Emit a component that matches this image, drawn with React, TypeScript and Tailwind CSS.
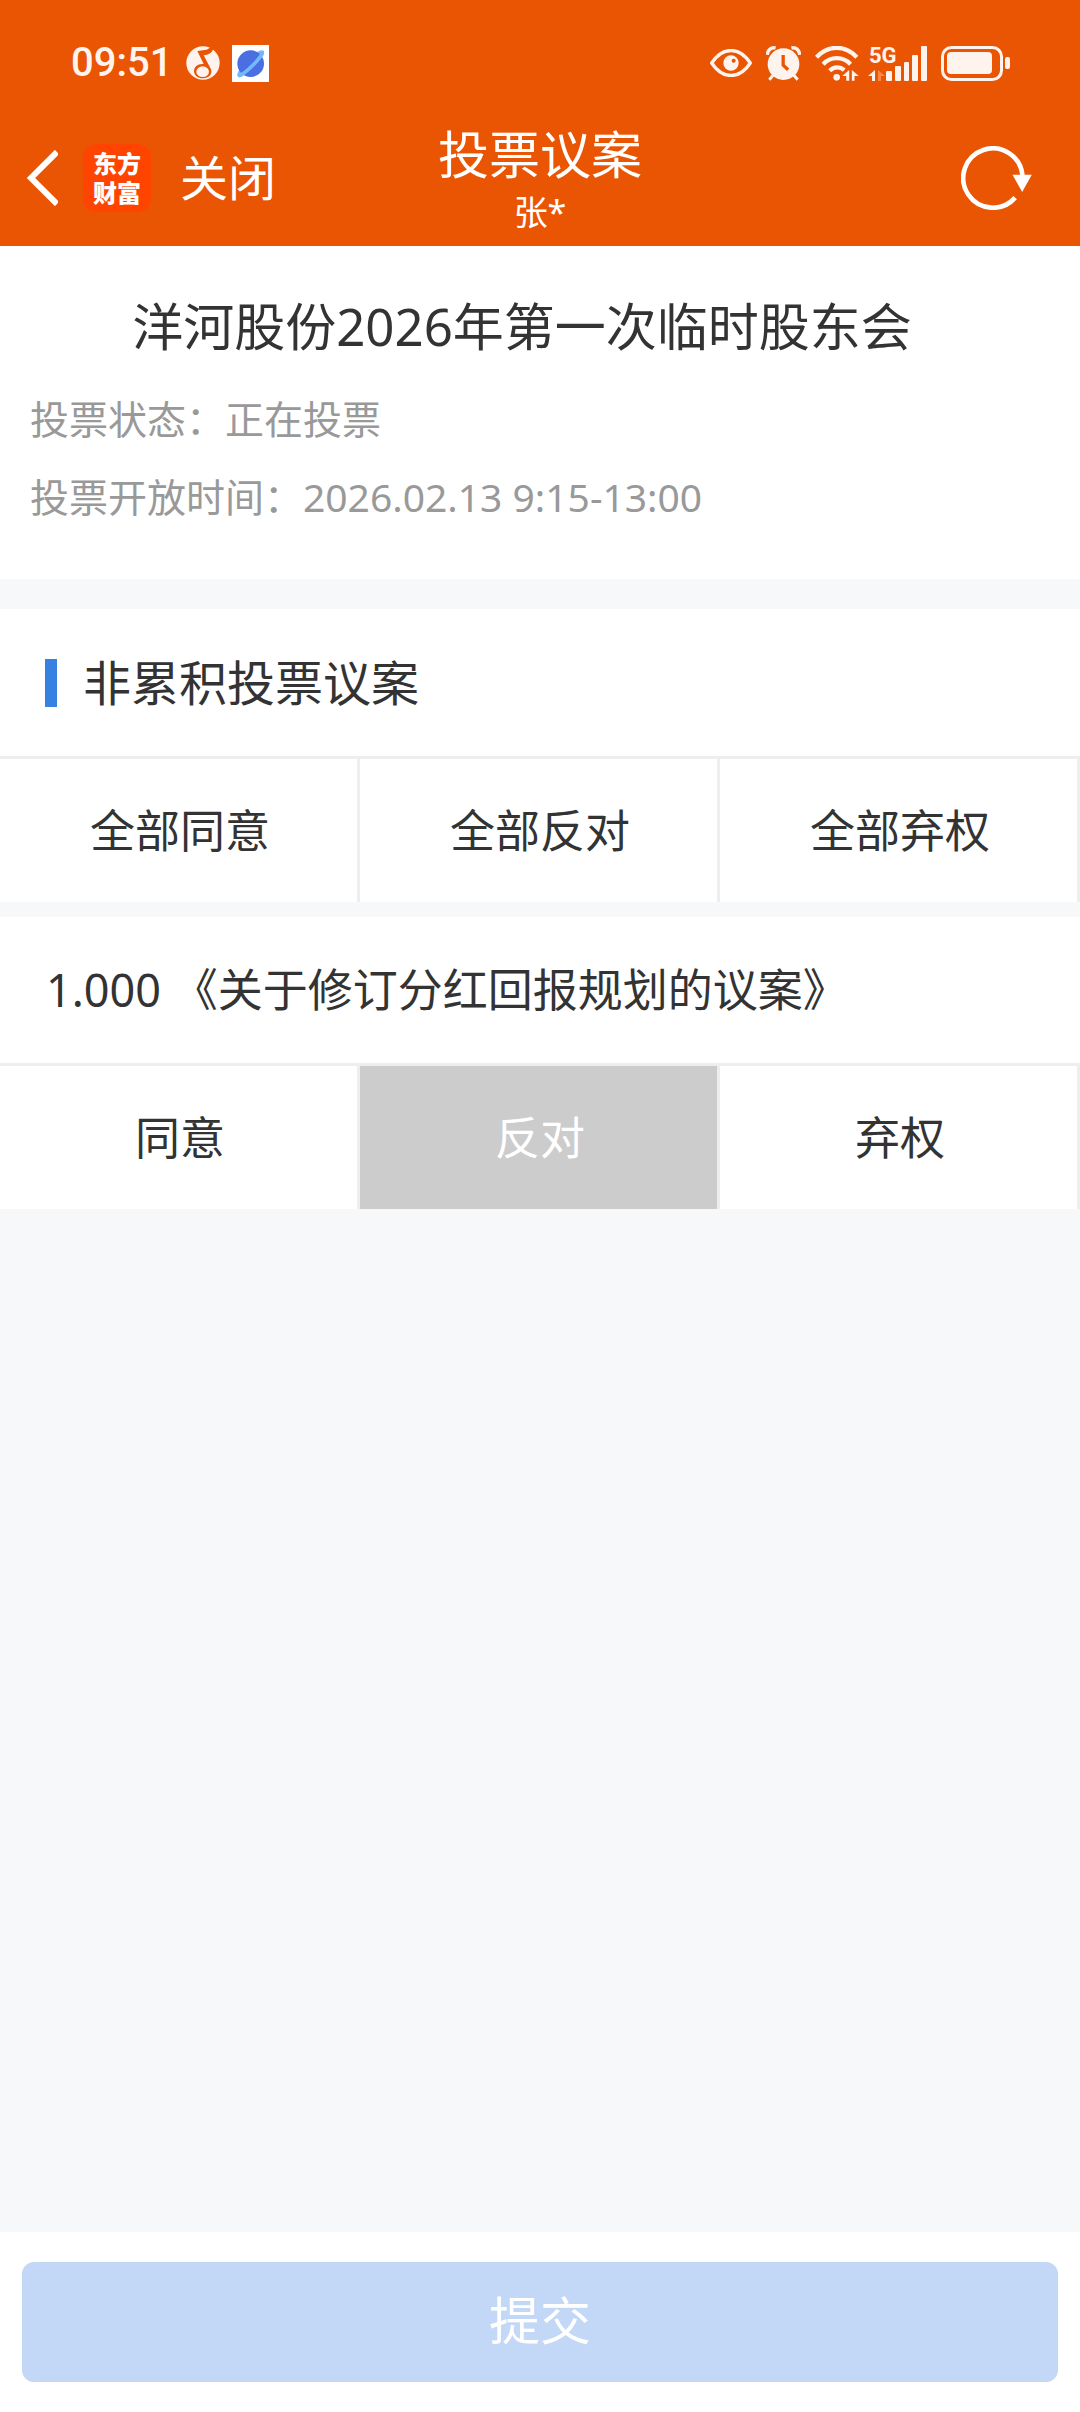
import { useState } from 'react'
import { clsx } from 'clsx'

const bulkActions = [
  { value: 'agree', label: '全部同意' },
  { value: 'against', label: '全部反对' },
  { value: 'abstain', label: '全部弃权' },
]

const voteOptions = [
  { value: 'agree', label: '同意' },
  { value: 'against', label: '反对' },
  { value: 'abstain', label: '弃权' },
]

const proposals = [{ id: '1.000', title: '《关于修订分红回报规划的议案》' }]

function MusicIcon() {
  return (
    <svg viewBox="0 0 102 102" className="h-[34px] w-[34px]" aria-hidden="true">
      <circle cx="51" cy="51" r="50" fill="#fff3ee" />
      <path d="M34 15 62 11 80 0 83 5C80 18 70 26 53 28L75 70C80 86 68 97 51 97 34 97 24 87 24 75 24 62 36 52 53 54Z" fill="#ea5504" />
      <ellipse cx="50" cy="77" rx="19" ry="16" fill="#fff3ee" />
    </svg>
  )
}

function PlanetIcon() {
  return (
    <svg viewBox="0 0 111 111" className="h-[37px] w-[37px]" aria-hidden="true">
      <rect width="111" height="111" fill="#fff" />
      <g transform="translate(56 56) rotate(-45)" fill="none" stroke="#73b8fa" strokeWidth="11">
        <ellipse rx="49" ry="8" />
        <circle r="40" fill="#4a6fe3" stroke="none" />
        <path d="M-49 0A49 8 0 0 0 49 0" />
      </g>
    </svg>
  )
}

function EyeIcon() {
  return (
    <svg viewBox="0 0 126 84" className="h-7 w-[42px]" aria-hidden="true">
      <path d="M5 42C38-8 88-8 121 42 88 92 38 92 5 42Z" fill="none" stroke="#fff3ee" strokeWidth="10" strokeLinejoin="round" />
      <circle cx="63" cy="42" r="23" fill="#fff3ee" />
      <circle cx="71" cy="35" r="6" fill="#ea5504" />
    </svg>
  )
}

function AlarmIcon() {
  return (
    <svg viewBox="0 0 106 106" className="h-[35px] w-[35px]" aria-hidden="true">
      <circle cx="53" cy="55" r="48" fill="#fff3ee" />
      <path d="M4 27C5 11 16 3 29 6M102 27C101 11 90 3 77 6" stroke="#fff3ee" strokeWidth="10" fill="none" />
      <path d="M22 88 10 102M84 88l12 14" stroke="#fff3ee" strokeWidth="9" />
      <path d="M52 27v31l15 14" stroke="#ea5504" strokeWidth="10" fill="none" />
    </svg>
  )
}

function WifiIcon() {
  return (
    <svg viewBox="0 0 132 106" className="h-[35px] w-11" aria-hidden="true">
      <g fill="none" stroke="#fff3ee" strokeWidth="13">
        <path d="M4 34C39-4 91-4 126 34" />
        <path d="M24 55c23-24 60-24 83 0" />
        <path d="M44 75c13-13 31-13 44-2" />
      </g>
      <circle cx="65" cy="95" r="10" fill="#fff3ee" />
      <path d="M103 73v32h-9V91H82Zm8 0v32h8V91h13Z" fill="#fff3ee" />
    </svg>
  )
}

function SignalIcon() {
  return (
    <svg viewBox="0 0 59 35" className="h-[35px] w-[59px] overflow-visible" aria-hidden="true">
      <text
        x="1"
        y="17"
        fontSize="22"
        fontWeight="700"
        fill="#fff3ee"
        className="font-['Liberation_Sans_Narrow','Roboto',sans-serif]"
      >
        5G
      </text>
      <path d="M7 24v11H4v-5H0Z" fill="#fff3ee" />
      <path d="M10 24v11h3v-5h4Z" fill="#ff8648" />
      <g fill="#fff3ee">
        <rect x="18" y="25" width="6" height="10" rx="1" />
        <rect x="27" y="20" width="6" height="15" rx="1" />
        <rect x="36" y="16" width="5" height="19" rx="1" />
        <rect x="44" y="9" width="6" height="26" rx="1" />
        <rect x="53" y="0" width="6" height="35" rx="1" />
      </g>
    </svg>
  )
}

function BatteryIcon() {
  return (
    <svg viewBox="0 0 69 35" className="h-[35px] w-[69px]" aria-hidden="true">
      <rect x="1.5" y="1.5" width="59" height="32" rx="9" fill="none" stroke="#fff3ee" strokeWidth="3" />
      <rect x="6" y="6" width="45" height="22" rx="4" fill="#fff3ee" />
      <rect x="64" y="11" width="5" height="12" rx="2" fill="#fff3ee" />
    </svg>
  )
}

function StatusBar() {
  return (
    <div className="flex h-[110px] items-center justify-between pt-4 pr-[70px] pl-[71px]">
      <div className="flex items-center gap-[14px]">
        <span className="text-[40px] leading-none font-medium text-[#fff3ee] font-['Roboto',sans-serif]">09:51</span>
        <div className="flex items-center gap-3">
          <MusicIcon />
          <PlanetIcon />
        </div>
      </div>
      <div className="flex items-center gap-[14px]">
        <EyeIcon />
        <AlarmIcon />
        <div className="flex gap-[9px]">
          <WifiIcon />
          <SignalIcon />
        </div>
        <BatteryIcon />
      </div>
    </div>
  )
}

function NavBar() {
  return (
    <div className="grid h-[136px] grid-cols-[1fr_auto_1fr] items-center">
      <div className="flex items-center pl-[26px]">
        <button type="button" aria-label="返回" className="cursor-pointer">
          <svg viewBox="0 0 32 56" className="h-14 w-8" fill="none" stroke="#fff" strokeWidth="6" aria-hidden="true">
            <path d="M31 2 5 28l26 26" />
          </svg>
        </button>
        <div className="ml-[25px] flex h-[68px] w-[68px] flex-col items-center justify-center rounded-[14px] bg-[#ff4400] text-[24px] leading-[29px] font-black text-white">
          <span>东方</span>
          <span>财富</span>
        </div>
        <button type="button" className="ml-[29px] cursor-pointer text-[48px] leading-[60px]">
          关闭
        </button>
      </div>
      <div className="flex flex-col items-center pt-1">
        <h1 className="text-[51px] leading-[64px]">投票议案</h1>
        <p className="text-[34px] leading-[52px]">张*</p>
      </div>
      <button type="button" aria-label="刷新" className="mr-12 cursor-pointer justify-self-end">
        <svg viewBox="0 0 212 192" className="h-16 w-[71px]" aria-hidden="true">
          <path d="M162 155A89 89 0 1 1 184 90" fill="none" stroke="#fff" strokeWidth="14" />
          <path d="M154 86h58l-29 52Z" fill="#fff" />
        </svg>
      </button>
    </div>
  )
}

type OptionRowProps = {
  label: string
  options: { value: string; label: string }[]
  selected?: string
  onSelect: (value: string) => void
}

function OptionRow({ label, options, selected, onSelect }: OptionRowProps) {
  return (
    <div role="group" aria-label={label} className="grid grid-cols-3 border-t-3 border-[#eee]">
      {options.map((option) => (
        <button
          key={option.value}
          type="button"
          aria-pressed={selected === option.value}
          onClick={() => onSelect(option.value)}
          className={clsx(
            'h-[143px] cursor-pointer border-r-3 border-[#eee] pl-[3px] text-[45px]',
            selected === option.value ? 'bg-[#ccc] text-white' : 'bg-white',
          )}
        >
          {option.label}
        </button>
      ))}
    </div>
  )
}

export default function App() {
  const [votes, setVotes] = useState<Record<string, string>>({ '1.000': 'against' })

  const voteAll = (value: string) => {
    setVotes(Object.fromEntries(proposals.map((p) => [p.id, value])))
  }

  return (
    <div lang="zh-CN" className="flex min-h-screen flex-col bg-[#f7f8fa] text-[#333] font-['Noto_Sans','Noto_Sans_CJK_SC',sans-serif]">
      <header className="bg-[#ea5504] text-white">
        <StatusBar />
        <NavBar />
      </header>

      <main className="flex-1">
        <section className="bg-white px-[30px] pt-[38px] pb-[43px]">
          <h2 className="mb-3 pr-9 text-center text-[51px] leading-[84px]">洋河股份2026年第一次临时股东会</h2>
          <p className="text-[39px] leading-[78px] text-[#999]">投票状态：正在投票</p>
          <p className="text-[39px] leading-[78px] text-[#999]">投票开放时间：2026.02.13 9:15-13:00</p>
        </section>

        <section className="mt-[30px] bg-white">
          <div className="flex h-[147px] items-center gap-[26px] pl-[45px]">
            <span className="h-12 w-3 bg-[#3781e1]" />
            <h3 className="text-[48px] leading-[60px]">非累积投票议案</h3>
          </div>
          <OptionRow label="全部议案" options={bulkActions} onSelect={voteAll} />
        </section>

        {proposals.map((proposal) => (
          <section key={proposal.id} className="mt-[15px] bg-white">
            <h3 className="px-[46px] text-[45px] leading-[146px]">
              {proposal.id} {proposal.title}
            </h3>
            <OptionRow
              label={proposal.title}
              options={voteOptions}
              selected={votes[proposal.id]}
              onSelect={(value) => setVotes({ ...votes, [proposal.id]: value })}
            />
          </section>
        ))}
      </main>

      <footer className="bg-white px-[22px] py-[30px]">
        <button type="button" className="h-[120px] w-full cursor-pointer rounded-xl bg-[#c3d8f6] pb-1 text-[51px] text-white">
          提交
        </button>
      </footer>
    </div>
  )
}
